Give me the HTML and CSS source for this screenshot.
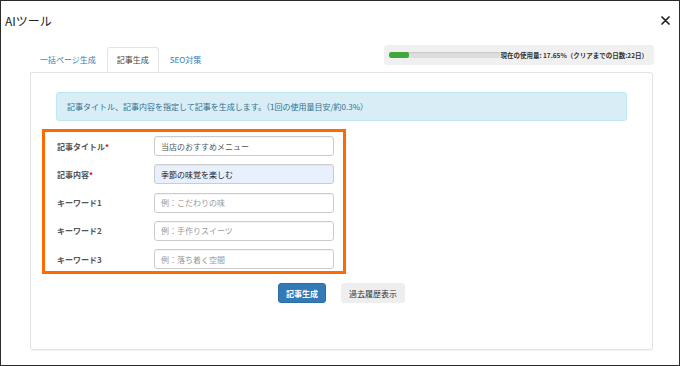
FILE: index.html
```html
<!DOCTYPE html>
<html lang="ja">
<head>
  <meta charset="UTF-8" />
  <title>AIツール</title>
  <link rel="stylesheet" href="styles.css">
</head>
<body>

  <!-- Header -->
  <div class="modal-header">
    <h1>AIツール</h1>
    <button type="button" class="close-btn" aria-label="閉じる">
      <svg width="9" height="9" viewBox="0 0 9 9"><path d="M1 1L8 8M8 1L1 8" stroke="#222" stroke-width="1.7" stroke-linecap="round"/></svg>
    </button>
  </div>

  <!-- Tabs + usage -->
  <div class="toolbar">
    <ul class="tabs">
      <li><a href="#">一括ページ生成</a></li>
      <li class="active"><a href="#">記事生成</a></li>
      <li><a href="#">SEO対策</a></li>
    </ul>
    <div class="usage">
      <div class="usage-bar"><div class="usage-fill" style="width: 17.65%;"></div></div>
      <span class="usage-text">現在の使用量: 17.65%（クリアまでの日数:22日）</span>
    </div>
  </div>

  <!-- Panel -->
  <div class="panel">
    <div class="alert">記事タイトル、記事内容を指定して記事を生成します。（1回の使用量目安/約0.3%）</div>

    <form class="article-form" onsubmit="return false">
      <div class="row">
        <label>記事タイトル<span class="req">*</span></label>
        <input type="text" value="当店のおすすめメニュー" />
      </div>
      <div class="row">
        <label>記事内容<span class="req">*</span></label>
        <input type="text" class="filled" value="季節の味覚を楽しむ" />
      </div>
      <div class="row">
        <label>キーワード1</label>
        <input type="text" placeholder="例：こだわりの味" />
      </div>
      <div class="row">
        <label>キーワード2</label>
        <input type="text" placeholder="例：手作りスイーツ" />
      </div>
      <div class="row">
        <label>キーワード3</label>
        <input type="text" placeholder="例：落ち着く空間" />
      </div>
    </form>

    <div class="actions">
      <button type="button" class="btn btn-primary">記事生成</button>
      <button type="button" class="btn btn-default">過去履歴表示</button>
    </div>
  </div>

</body>
</html>
```

FILE: styles.css
```css
* {
  box-sizing: border-box;
}
html {
  background: #fff;
}
body {
  margin: 0;
  width: 680px;
  height: 366px;
  border: 1px solid #2b2b2b;
  background: #fff;
  font-family: 'Noto Sans CJK JP', 'Noto Sans', sans-serif;
  color: #333;
  overflow: hidden;
}
.modal-header {
  height: 38px;
  display: flex;
  align-items: center;
  justify-content: space-between;
  padding: 0 9px 0 4px;
}
.modal-header h1 {
  margin: 0;
  font-size: 12px;
  font-weight: normal;
  color: #222;
}
.close-btn {
  background: none;
  border: none;
  padding: 0;
  display: flex;
  cursor: pointer;
}
.toolbar {
  height: 33px;
  display: flex;
  justify-content: space-between;
  align-items: flex-start;
  margin: 0 26px 0 29px;
}
.tabs {
  list-style: none;
  margin: 0;
  padding: 0;
  display: flex;
  align-self: flex-end;
}
.tabs li {
  margin-right: 1px;
}
.tabs a {
  display: block;
  height: 25px;
  line-height: 24px;
  padding: 0 9px;
  font-size: 8px;
  color: #337ab7;
  text-decoration: none;
  border: 1px solid transparent;
  border-bottom: none;
  border-radius: 3px 3px 0 0;
}
.tabs .active a {
  color: #444;
  background: #fff;
  border-color: #e3e3e3;
  position: relative;
  z-index: 1;
  margin-bottom: -1px;
}
.usage {
  margin-top: 6px;
  margin-right: -1px;
  width: 270px;
  height: 20px;
  background: #f0f0f0;
  border-radius: 3px;
  display: flex;
  align-items: center;
  padding: 0 6px 0 5px;
}
.usage-bar {
  width: 115px;
  height: 6px;
  background: #ddd;
  border-radius: 2px;
  box-shadow: inset 0 1px 1px rgba(0, 0, 0, 0.1);
  overflow: hidden;
}
.usage-fill {
  height: 100%;
  background: #3ea83e;
  border-radius: 2px;
}
.usage-text {
  font-size: 6.5px;
  font-weight: bold;
  color: #333;
  white-space: nowrap;
}
.panel {
  margin: 0 26px 0 29px;
  height: 278px;
  border: 1px solid #e3e3e3;
  border-radius: 0 3px 3px 3px;
  box-shadow: 0 1px 1px rgba(0, 0, 0, 0.05);
  padding: 19px 25px;
}
.alert {
  height: 29px;
  line-height: 27px;
  padding: 0 10px;
  font-size: 8px;
  color: #31708f;
  background: #d9edf7;
  border: 1px solid #bce8f1;
  border-radius: 3px;
}
.article-form {
  width: 304px;
  margin: 8px 0 0 -14px;
  border: 3px solid #ff6a00;
  padding: 4px 0 2px 12px;
  display: grid;
  row-gap: 8.25px;
}
.row {
  display: flex;
  align-items: center;
  height: 20px;
}
.row label {
  width: 97px;
  font-size: 8px;
  font-weight: bold;
  color: #555;
}
.req {
  color: #e00;
}
.row input {
  width: 180px;
  height: 20px;
  padding: 0 6px;
  border: 1px solid #ccc;
  border-radius: 3px;
  font-family: inherit;
  font-size: 8px;
  color: #555;
  box-shadow: inset 0 1px 1px rgba(0, 0, 0, 0.05);
}
.row input.filled {
  background: #e8f0fe;
  color: #222;
}
.row input::placeholder {
  color: #999;
}
.actions {
  display: flex;
  justify-content: center;
  gap: 15px;
  margin-top: 9px;
}
.btn {
  height: 20px;
  padding: 0 7px;
  border-radius: 3px;
  font-family: inherit;
  font-size: 8px;
  cursor: pointer;
}
.btn-primary {
  background: #337ab7;
  border: 1px solid #2e6da4;
  color: #fff;
  font-weight: bold;
}
.btn-default {
  background: #eee;
  border: 1px solid #eee;
  color: #333;
}
```
